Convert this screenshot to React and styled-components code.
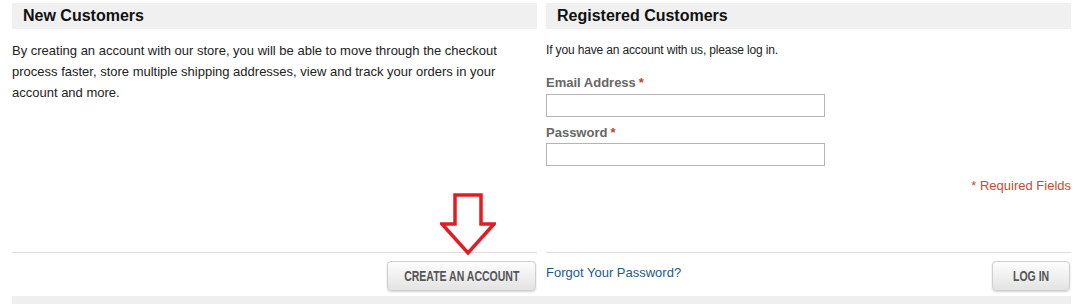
import React from "react";
import styled, { createGlobalStyle } from "styled-components";

const GlobalStyle = createGlobalStyle`
  html, body {
    margin: 0;
    padding: 0;
    background: #fff;
    font-family: "Liberation Sans", Arial, sans-serif;
    color: #222;
  }
`;

const Page = styled("div")`
  padding: 3px 7px 0 12px;
`;

const Columns = styled("div")`
  display: grid;
  grid-template-columns: 525px 525px;
  column-gap: 9px;
`;

const Column = styled("div")`
  display: flex;
  flex-direction: column;
  position: relative;
`;

const Header = styled("h2")`
  margin: 0;
  height: 26px;
  line-height: 26px;
  background: #f0f0f0;
  padding-left: 11px;
  font-size: 16px;
  font-weight: bold;
  color: #111;
`;

const Content = styled("div")`
  height: 223px;
  box-sizing: border-box;
  padding-top: 11px;
  display: flex;
  flex-direction: column;
`;

const Text = styled("p")`
  margin: 0;
  font-size: ${(p) => p.$size}px;
  letter-spacing: ${(p) => p.$spacing || 0}px;
  line-height: 21px;
  color: #222;
`;

const Label = styled("label")`
  display: block;
  margin-top: ${(p) => p.$top}px;
  margin-bottom: ${(p) => p.$bottom}px;
  font-size: 13px;
  line-height: 16px;
  font-weight: bold;
  color: #666;
`;

const Star = styled("em")`
  font-style: normal;
  color: #c6401f;
  margin-left: 3px;
`;

const Input = styled("input")`
  display: block;
  width: 279px;
  height: 23px;
  box-sizing: border-box;
  margin: 0;
  border: 1px solid #b4b4b4;
  background: #fff;
`;

const Required = styled("p")`
  margin: 12px 0 0;
  text-align: right;
  font-size: 13px;
  line-height: 16px;
  color: #cf4a2a;
`;

const Footer = styled("div")`
  border-top: 1px solid #dedede;
  padding: 8px 1px 5px 0;
  display: flex;
  align-items: center;
  justify-content: ${(p) => p.$justify};
`;

const Button = styled("button")`
  width: ${(p) => p.$width}px;
  height: 30px;
  padding: 0;
  display: flex;
  align-items: center;
  justify-content: center;
  overflow: visible;
  border: 1px solid #cfcfcf;
  border-radius: 4px;
  background: linear-gradient(#fdfdfd, #e3e3e3);
  box-shadow: 0 1px 2px rgba(0, 0, 0, 0.18);
  cursor: pointer;
`;

const ButtonLabel = styled("span")`
  display: inline-block;
  white-space: nowrap;
  font-family: "Liberation Sans", Arial, sans-serif;
  font-size: 14px;
  font-weight: bold;
  color: #555;
  text-transform: uppercase;
  transform: scaleX(0.75);
`;

const Link = styled("a")`
  font-size: 13px;
  color: #1d5a8c;
  text-decoration: none;
  margin-top: -8px;
`;

const Arrow = styled("svg")`
  position: absolute;
  left: 428px;
  top: 189px;
`;

const BottomBar = styled("div")`
  height: 10px;
  background: #efefef;
`;

function DownArrow() {
  return (
    <Arrow width="56" height="64" viewBox="0 0 56 64">
      <polygon
        points="15,3 41,3 41,32 54,32 28,61 2,32 15,32"
        fill="none"
        stroke="#e21b24"
        strokeWidth="3.5"
        strokeLinejoin="miter"
      />
    </Arrow>
  );
}

function App() {
  return (
    <Page>
      <GlobalStyle />
      <Columns>
        <Column>
          <Header>New Customers</Header>
          <Content>
            <Text $size={13}>
              By creating an account with our store, you will be able to move
              through the checkout process faster, store multiple shipping
              addresses, view and track your orders in your account and more.
            </Text>
          </Content>
          <DownArrow />
          <Footer $justify="flex-end">
            <Button $width={149}>
              <ButtonLabel>Create an Account</ButtonLabel>
            </Button>
          </Footer>
        </Column>
        <Column>
          <Header>Registered Customers</Header>
          <Content>
            <Text $size={12} $spacing={-0.15}>
              If you have an account with us, please log in.
            </Text>
            <Label $top={14} $bottom={3}>
              Email Address<Star>*</Star>
            </Label>
            <Input type="email" />
            <Label $top={8} $bottom={2}>
              Password<Star>*</Star>
            </Label>
            <Input type="password" />
            <Required>* Required Fields</Required>
          </Content>
          <Footer $justify="space-between">
            <Link href="#">Forgot Your Password?</Link>
            <Button $width={78}>
              <ButtonLabel>Log In</ButtonLabel>
            </Button>
          </Footer>
        </Column>
      </Columns>
      <BottomBar />
    </Page>
  );
}

export default App;
